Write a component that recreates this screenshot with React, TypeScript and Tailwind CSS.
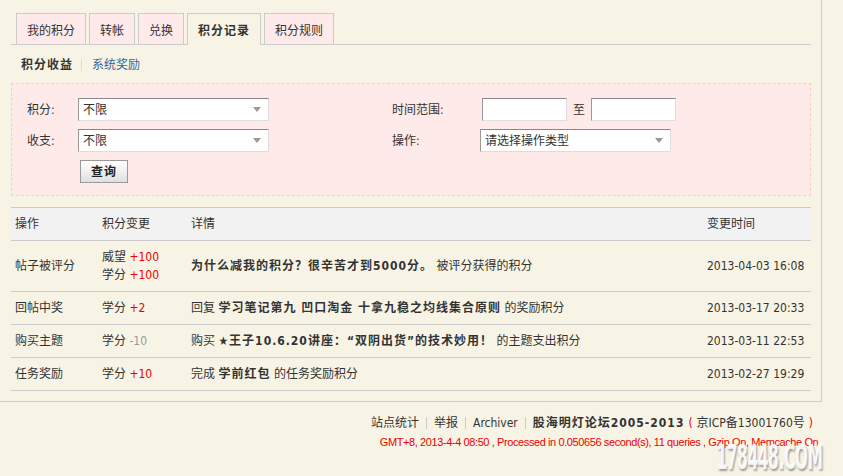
import React from 'react';

const tabs = [
  { label: '我的积分' },
  { label: '转帐' },
  { label: '兑换' },
  { label: '积分记录', active: true },
  { label: '积分规则' },
];

type Change = { name: string; value: string; up: boolean };

interface LogRow {
  action: string;
  changes: Change[];
  pre?: string;
  title: string;
  post: string;
  time: string;
}

const rows: LogRow[] = [
  {
    action: '帖子被评分',
    changes: [
      { name: '威望', value: '+100', up: true },
      { name: '学分', value: '+100', up: true },
    ],
    title: '为什么减我的积分？很辛苦才到5000分。',
    post: ' 被评分获得的积分',
    time: '2013-04-03 16:08',
  },
  {
    action: '回帖中奖',
    changes: [{ name: '学分', value: '+2', up: true }],
    pre: '回复 ',
    title: '学习笔记第九 凹口淘金 十拿九稳之均线集合原则',
    post: ' 的奖励积分',
    time: '2013-03-17 20:33',
  },
  {
    action: '购买主题',
    changes: [{ name: '学分', value: '-10', up: false }],
    pre: '购买 ',
    title: '★王子10.6.20讲座：“双阴出货”的技术妙用！',
    post: ' 的主题支出积分',
    time: '2013-03-11 22:53',
  },
  {
    action: '任务奖励',
    changes: [{ name: '学分', value: '+10', up: true }],
    pre: '完成 ',
    title: '学前红包',
    post: ' 的任务奖励积分',
    time: '2013-02-27 19:29',
  },
];

function FakeSelect({ value, width }: { value: string; width: string }) {
  return (
    <div
      className={`${width} h-[23px] bg-white border border-[#ddd] border-t-[#888] border-l-[#999] flex items-center justify-between pl-[4px] pr-[7px]`}
    >
      <span>{value}</span>
      <svg width="8" height="5" viewBox="0 0 8 5">
        <path d="M0 0 H8 L4 5 Z" fill="#999" />
      </svg>
    </div>
  );
}

function FakeInput() {
  return <div className="w-[85px] h-[23px] bg-white border border-[#ddd] border-t-[#888] border-l-[#999]" />;
}

export default function App() {
  return (
    <div className="relative w-[843px] min-h-[476px] bg-[#f8f4e5] text-[12px] leading-[18px] text-[#333] font-['DejaVu_Sans_Condensed','Noto_Sans_CJK_SC',sans-serif]">
      <div className="w-[822px] border-r border-b border-[#ccc] pl-[11px] pr-[10px] pt-[13px] pb-[10px]">
        {/* tabs */}
        <ul className="flex gap-[3px] pl-[5px] border-b border-[#ccc] h-[32px]">
          {tabs.map((t) => (
            <li
              key={t.label}
              className={
                t.active
                  ? 'h-[32px] px-[10px] border border-b-0 border-[#ccc] bg-[#f8f4e5] font-bold tracking-[1px] flex items-center pt-[3px]'
                  : 'h-[31px] px-[10px] border border-b-0 border-[#ccc] bg-[#feeaea] flex items-center pt-[3px]'
              }
            >
              {t.label}
            </li>
          ))}
        </ul>

        {/* sub nav */}
        <div className="flex items-center mt-[11px] pl-[10px]">
          <span className="font-bold tracking-[1px]">积分收益</span>
          <span className="ml-[8px] mr-[10px] w-px h-[12px] bg-[#ddd]" />
          <span className="text-[#336699]">系统奖励</span>
        </div>

        {/* search form */}
        <div className="mt-[9px] border border-dashed border-[#fcc] bg-[#ffeaea] pt-[14px] pb-[12px] pl-[15px]">
          <div className="flex">
            <div className="w-[365px] flex flex-col gap-[8px]">
              <div className="flex items-center">
                <span className="w-[51px]">积分:</span>
                <FakeSelect value="不限" width="w-[191px]" />
              </div>
              <div className="flex items-center">
                <span className="w-[51px]">收支:</span>
                <FakeSelect value="不限" width="w-[191px]" />
              </div>
              <div className="pl-[53px]">
                <button className="w-[48px] h-[23px] border border-[#999] bg-gradient-to-b from-white to-[#e0e0e0] font-bold tracking-[1px] text-[#222] leading-[20px]">
                  查询
                </button>
              </div>
            </div>
            <div className="flex flex-col gap-[8px]">
              <div className="flex items-center">
                <span className="w-[90px]">时间范围:</span>
                <FakeInput />
                <span className="mx-[6px]">至</span>
                <FakeInput />
              </div>
              <div className="flex items-center">
                <span className="w-[88px]">操作:</span>
                <FakeSelect value="请选择操作类型" width="w-[191px]" />
              </div>
            </div>
          </div>
        </div>

        {/* log table */}
        <table className="mt-[11px] w-full border-collapse border-t border-[#ccc] table-fixed">
          <colgroup>
            <col className="w-[87px]" />
            <col className="w-[89px]" />
            <col />
            <col className="w-[108px]" />
          </colgroup>
          <thead>
            <tr className="bg-[#f2f2f2] border-b border-[#ccc]">
              <th className="text-left font-normal py-[7px] pl-[4px]">操作</th>
              <th className="text-left font-normal py-[7px] pl-[4px]">积分变更</th>
              <th className="text-left font-normal py-[7px] pl-[4px]">详情</th>
              <th className="text-left font-normal py-[7px] pl-[4px]">变更时间</th>
            </tr>
          </thead>
          <tbody>
            {rows.map((r) => (
              <tr key={r.time} className="border-b border-[#ccc]">
                <td className="py-[7px] pl-[4px]">{r.action}</td>
                <td className="py-[7px] pl-[4px]">
                  {r.changes.map((c) => (
                    <div key={c.name + c.value}>
                      {c.name}{' '}
                      <span className={c.up ? 'text-[#e00]' : 'text-[#999]'}>{c.value}</span>
                    </div>
                  ))}
                </td>
                <td className="py-[7px] pl-[4px] whitespace-nowrap">
                  {r.pre}
                  <strong className="font-bold tracking-[1px]">{r.title}</strong>
                  {r.post}
                </td>
                <td className="py-[7px] pl-[4px] text-[#333]">{r.time}</td>
              </tr>
            ))}
          </tbody>
        </table>
      </div>

      {/* footer */}
      <div className="mt-[12px] pr-[30px] flex justify-end items-center">
        <span>站点统计</span>
        <span className="mx-[7px] w-px h-[12px] bg-[#ccc]" />
        <span>举报</span>
        <span className="mx-[7px] w-px h-[12px] bg-[#ccc]" />
        <span>Archiver</span>
        <span className="mx-[7px] w-px h-[12px] bg-[#ccc]" />
        <strong className="font-bold tracking-[1px]">股海明灯论坛2005-2013</strong>
        <span className="text-[#e00] ml-[4px]">(</span>
        <span className="mx-[4px]">京ICP备13001760号</span>
        <span className="text-[#e00]">)</span>
      </div>
      <div className="mt-[2px] pr-[22px] text-right text-[11px] leading-[16px] tracking-[-0.4px] text-[#e00] font-['Liberation_Sans',sans-serif]">
        GMT+8, 2013-4-4 08:50 , Processed in 0.050656 second(s), 11 queries , Gzip On, Memcache On.
      </div>

      {/* watermark overlay */}
      <div className="absolute right-[21px] top-[444px] origin-right scale-x-[0.47] text-[33px] leading-[28px] font-bold tracking-[-1px] text-white/90 font-['DejaVu_Sans',sans-serif] [text-shadow:2px_2px_3px_#999]">
        178448.COM
      </div>
    </div>
  );
}
